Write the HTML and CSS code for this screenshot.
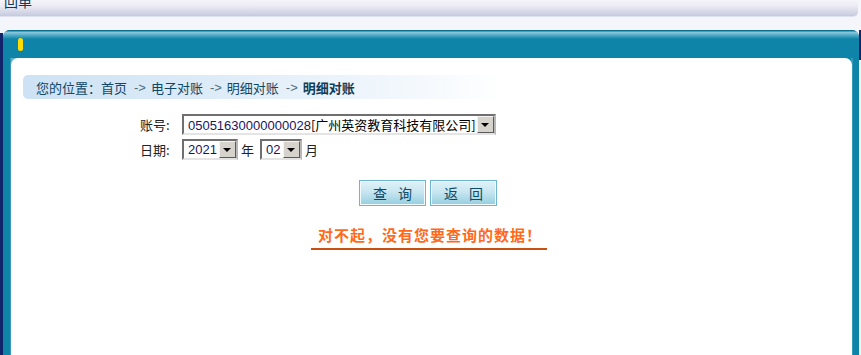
FILE: index.html
```html
<!DOCTYPE html>
<html lang="zh">
<head>
<meta charset="utf-8">
<title>明细对账</title>
<link rel="stylesheet" href="styles.css">
</head>
<body>
<div class="topbar"><div class="topbar-title">回单</div></div>
<div class="gap"></div>
<div class="frame">
  <div class="edge-left"></div>
  <div class="panel">
    <div class="panel-head"><span class="marker"></span></div>
    <div class="content">
      <div class="crumb">
        <span>您的位置：首页</span><span class="arrow">-&gt;</span><span>电子对账</span><span class="arrow">-&gt;</span><span>明细对账</span><span class="arrow">-&gt;</span><b>明细对账</b>
      </div>
      <div class="form">
        <div class="row">
          <span class="label">账号:</span>
          <div class="select wide"><span class="val"><span class="num">05051630000000028</span>[广州英资教育科技有限公司]</span><span class="drop"><i></i></span></div>
        </div>
        <div class="row">
          <span class="label">日期:</span>
          <div class="select year"><span class="val num">2021</span><span class="drop"><i></i></span></div>
          <span class="unit">年</span>
          <div class="select month"><span class="val num">02</span><span class="drop"><i></i></span></div>
          <span class="unit">月</span>
        </div>
      </div>
      <div class="buttons">
        <button class="btn">查 询</button>
        <button class="btn">返 回</button>
      </div>
      <div class="msg-wrap"><div class="msg">对不起，没有您要查询的数据！</div></div>
    </div>
  </div>
  <div class="edge-right"></div>
</div>
</body>
</html>
```
FILE: styles.css
```css
html, body {
  margin: 0;
  padding: 0;
  background: #f5f6fb;
  width: 861px;
  height: 355px;
  overflow: hidden;
  font-family: "Noto Sans CJK SC", "Liberation Sans", sans-serif;
}
.topbar {
  height: 16px;
  width: 858px;
  border-bottom: 1px solid #dfe2ee;
  border-radius: 0 0 5px 0;
  background: linear-gradient(#f7f5fa 0, #eceaf3 6px, #d9dbe8 11px, #c4cadf 16px);
  overflow: hidden;
}
.topbar-title {
  margin: -9px 0 0 4px;
  font-size: 14px;
  line-height: 20px;
  color: #0b3a5c;
}
.gap {
  height: 13px;
}
.frame {
  display: flex;
  height: 325px;
}
.edge-left {
  width: 3px;
  margin-top: 3px;
  background: #11246c;
}
.edge-right {
  width: 2px;
  height: 30px;
  background: #11246c;
}
.panel {
  width: 856px;
  display: flex;
  flex-direction: column;
  background: linear-gradient(90deg, #0e84a8 0, #0e84a8 7px, #5fb0cc 8px, #0e84a8 848px, #5fb0cc 849px, #0e84a8 850px);
  border-radius: 7px 7px 0 0;
  padding: 0 7px 0 8px;
}
.panel-head {
  height: 28px;
  margin: 0 -7px 0 -8px;
  padding-left: 15px;
  border-radius: 7px 7px 0 0;
  background: linear-gradient(#0b6f91 0, #0b6f91 1px, #8fcadf 2px, #55acc9 5px, #0e84a8 9px, #0e84a8 100%);
  display: flex;
  align-items: flex-start;
}
.marker {
  width: 5px;
  height: 13px;
  margin-top: 8px;
  border-radius: 3px;
  background: #ffdd00;
}
.content {
  flex: 1;
  background: #fff;
  border-radius: 7px 7px 0 0;
  padding-top: 17px;
}
.crumb {
  margin-left: 12px;
  width: 520px;
  height: 24px;
  border-radius: 5px;
  background: linear-gradient(90deg, #cde2f4 0, #dcebf8 180px, #f0f6fc 360px, #ffffff 480px);
  padding-left: 13px;
  box-sizing: border-box;
  display: flex;
  align-items: center;
  font-size: 13px;
  color: #0f4766;
  white-space: nowrap;
}
.crumb .arrow {
  margin: 0 5px 0 7px;
  color: #4a6f80;
  font-family: "Liberation Sans", sans-serif;
}
.crumb b {
  color: #0f3d58;
}
.form {
  margin: 15px 0 0 129px;
  display: flex;
  flex-direction: column;
  gap: 4px;
  font-size: 13px;
}
.row {
  display: flex;
  align-items: center;
  height: 21px;
}
.label {
  width: 42px;
  color: #222;
}
.select {
  height: 21px;
  box-sizing: border-box;
  border: 2px solid;
  border-color: #6f6f6f #b8b8b8 #e4e4e4 #6f6f6f;
  background: #fff;
  display: flex;
  align-items: center;
  justify-content: space-between;
  padding-left: 4px;
  color: #000;
  white-space: nowrap;
}
.select.wide { width: 314px; }
.select.year { width: 56px; }
.select.month { width: 42px; }
.num {
  font-family: "Liberation Sans", sans-serif;
  font-size: 13px;
  color: #1a1660;
}
.val {
  line-height: 17px;
}
.drop {
  width: 17px;
  height: 17px;
  box-sizing: border-box;
  background: #d6d3cc;
  border: 1px solid;
  border-color: #f4f4f4 #5a5a5a #5a5a5a #f4f4f4;
  display: flex;
  align-items: center;
  justify-content: center;
}
.drop i {
  width: 0;
  height: 0;
  border-left: 4px solid transparent;
  border-right: 4px solid transparent;
  border-top: 4px solid #000;
}
.unit {
  margin: 0 6px 0 3px;
  color: #222;
}
.buttons {
  margin: 20px 0 0 348px;
  display: flex;
  gap: 4px;
}
.btn {
  width: 67px;
  height: 26px;
  margin: 0;
  padding: 0;
  border: 1px solid #6cb6d2;
  box-shadow: inset 0 0 0 1px #f2fafc;
  background: linear-gradient(#e0f2f8 0, #c8e6f0 45%, #94cee0 100%);
  font-family: "Noto Sans CJK SC", sans-serif;
  font-size: 14px;
  letter-spacing: 4px;
  padding-left: 4px;
  color: #0d4a66;
}
.msg-wrap {
  display: flex;
  margin: 20px 0 0 300px;
}
.msg {
  padding: 0 5px 4px 7px;
  border-bottom: 2px solid #c85010;
  font-size: 15px;
  line-height: 18px;
  font-weight: bold;
  letter-spacing: 1px;
  color: #ff6a1a;
}
```
